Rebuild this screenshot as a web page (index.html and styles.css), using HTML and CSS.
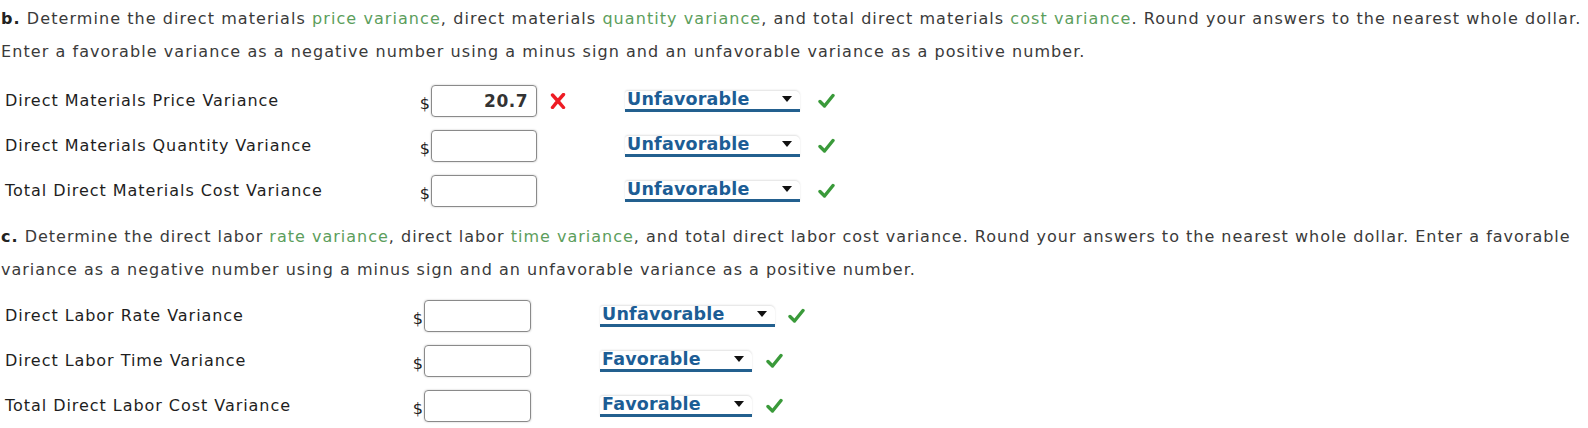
FILE: index.html
```html
<!DOCTYPE html>
<html lang="en">
<head>
<meta charset="utf-8">
<title>Variances</title>
<link rel="stylesheet" href="styles.css">
</head>
<body>
<section class="part part-b">
  <p class="prompt"><b>b.</b> Determine the direct materials <span class="term">price variance</span>, direct materials <span class="term">quantity variance</span>, and total direct materials <span class="term">cost variance</span>. Round your answers to the nearest whole dollar. Enter a favorable variance as a negative number using a minus sign and an unfavorable variance as a positive number.</p>
  <div class="rows">
    <div class="row">
      <span class="label">Direct Materials Price Variance</span>
      <span class="dollar">$</span>
      <span class="input">20.7</span>
      <span class="fb"><svg class="xmark" width="16" height="16" viewBox="0 0 16 16"><path d="M2.5 2 Q8 8 13.5 14.5 M13.5 1.5 Q8 7.5 2.5 14.5" fill="none" stroke="#ee1c24" stroke-width="3.4" stroke-linecap="round"/></svg></span>
      <span class="select w-unfav"><span class="sel-text">Unfavorable</span><svg class="arrow" width="10" height="6" viewBox="0 0 10 6"><path d="M0 0 H10 L5 6 Z" fill="#111"/></svg></span>
      <svg class="check" width="17" height="16" viewBox="0 0 17 16"><path d="M2 8.5 L6.5 13 L15 2.5" fill="none" stroke="#3a9a3a" stroke-width="3.4" stroke-linecap="round" stroke-linejoin="round"/></svg>
    </div>
    <div class="row">
      <span class="label">Direct Materials Quantity Variance</span>
      <span class="dollar">$</span>
      <span class="input"></span>
      <span class="fb"></span>
      <span class="select w-unfav"><span class="sel-text">Unfavorable</span><svg class="arrow" width="10" height="6" viewBox="0 0 10 6"><path d="M0 0 H10 L5 6 Z" fill="#111"/></svg></span>
      <svg class="check" width="17" height="16" viewBox="0 0 17 16"><path d="M2 8.5 L6.5 13 L15 2.5" fill="none" stroke="#3a9a3a" stroke-width="3.4" stroke-linecap="round" stroke-linejoin="round"/></svg>
    </div>
    <div class="row">
      <span class="label">Total Direct Materials Cost Variance</span>
      <span class="dollar">$</span>
      <span class="input"></span>
      <span class="fb"></span>
      <span class="select w-unfav"><span class="sel-text">Unfavorable</span><svg class="arrow" width="10" height="6" viewBox="0 0 10 6"><path d="M0 0 H10 L5 6 Z" fill="#111"/></svg></span>
      <svg class="check" width="17" height="16" viewBox="0 0 17 16"><path d="M2 8.5 L6.5 13 L15 2.5" fill="none" stroke="#3a9a3a" stroke-width="3.4" stroke-linecap="round" stroke-linejoin="round"/></svg>
    </div>
  </div>
</section>
<section class="part part-c">
  <p class="prompt"><b>c.</b> Determine the direct labor <span class="term">rate variance</span>, direct labor <span class="term">time variance</span>, and total direct labor cost variance. Round your answers to the nearest whole dollar. Enter a favorable variance as a negative number using a minus sign and an unfavorable variance as a positive number.</p>
  <div class="rows">
    <div class="row">
      <span class="label">Direct Labor Rate Variance</span>
      <span class="dollar">$</span>
      <span class="input"></span>
      <span class="fb"></span>
      <span class="select w-unfav"><span class="sel-text">Unfavorable</span><svg class="arrow" width="10" height="6" viewBox="0 0 10 6"><path d="M0 0 H10 L5 6 Z" fill="#111"/></svg></span>
      <svg class="check" width="17" height="16" viewBox="0 0 17 16"><path d="M2 8.5 L6.5 13 L15 2.5" fill="none" stroke="#3a9a3a" stroke-width="3.4" stroke-linecap="round" stroke-linejoin="round"/></svg>
    </div>
    <div class="row">
      <span class="label">Direct Labor Time Variance</span>
      <span class="dollar">$</span>
      <span class="input"></span>
      <span class="fb"></span>
      <span class="select w-fav"><span class="sel-text">Favorable</span><svg class="arrow" width="10" height="6" viewBox="0 0 10 6"><path d="M0 0 H10 L5 6 Z" fill="#111"/></svg></span>
      <svg class="check" width="17" height="16" viewBox="0 0 17 16"><path d="M2 8.5 L6.5 13 L15 2.5" fill="none" stroke="#3a9a3a" stroke-width="3.4" stroke-linecap="round" stroke-linejoin="round"/></svg>
    </div>
    <div class="row">
      <span class="label">Total Direct Labor Cost Variance</span>
      <span class="dollar">$</span>
      <span class="input"></span>
      <span class="fb"></span>
      <span class="select w-fav"><span class="sel-text">Favorable</span><svg class="arrow" width="10" height="6" viewBox="0 0 10 6"><path d="M0 0 H10 L5 6 Z" fill="#111"/></svg></span>
      <svg class="check" width="17" height="16" viewBox="0 0 17 16"><path d="M2 8.5 L6.5 13 L15 2.5" fill="none" stroke="#3a9a3a" stroke-width="3.4" stroke-linecap="round" stroke-linejoin="round"/></svg>
    </div>
  </div>
</section>
</body>
</html>
```

FILE: styles.css
```css
html, body {
  margin: 0;
  padding: 0;
  background: #fff;
}
body {
  font-family: "DejaVu Sans", Verdana, sans-serif;
  font-size: 16px;
  color: #333;
  padding-top: 2px;
}
.part {
  padding-left: 1px;
}
.prompt {
  margin: 0;
  line-height: 33px;
  color: #3a3a3a;
  letter-spacing: 1.07px;
}
.part-c .prompt {
  letter-spacing: 1px;
}
.prompt b {
  color: #222;
}
.term {
  color: #5c9e5c;
}
.part-b .prompt {
  margin-bottom: 10px;
}
.part-c {
  margin-top: 7px;
}
.part-c .prompt {
  margin-bottom: 7px;
}
.row {
  display: flex;
  align-items: center;
  height: 45px;
}
.label {
  color: #1e1e1e;
  padding-left: 4px;
  box-sizing: border-box;
  letter-spacing: 0.95px;
}
.part-b .label { width: 414px; }
.part-c .label { width: 407px; }
.dollar {
  width: 16px;
  text-align: right;
  padding-right: 1px;
  box-sizing: border-box;
  color: #222;
  line-height: 16px;
  padding-top: 6px;
}
.input {
  box-sizing: border-box;
  width: 106px;
  height: 32px;
  border: 1px solid #8a8a8a;
  border-radius: 4px;
  box-shadow: 0 0 2px rgba(0,0,0,0.25);
  text-align: right;
  padding-right: 8px;
  font-weight: bold;
  font-size: 17px;
  letter-spacing: 0.5px;
  line-height: 30px;
  color: #333;
}
.part-c .input { width: 107px; }
.fb {
  display: flex;
  align-items: center;
}
.part-b .fb { width: 88px; padding-left: 13px; box-sizing: border-box; }
.part-c .fb { width: 69px; }
.select {
  box-sizing: border-box;
  height: 21px;
  display: flex;
  align-items: flex-end;
  justify-content: space-between;
  background: #fff;
  border-bottom: 3px solid #23608f;
  border-radius: 3px 5px 0 0;
  box-shadow: 0 -1px 2px rgba(0,0,0,0.12);
  padding: 0 8px 0 2px;
  margin-top: 1px;
}
.w-unfav { width: 175px; }
.w-fav { width: 152px; }
.sel-text {
  font-weight: bold;
  font-size: 17.5px;
  letter-spacing: 0.2px;
  color: #1c5d95;
  line-height: 19px;
}
.arrow {
  display: block;
  margin-bottom: 7px;
}
.check {
  display: block;
  margin-left: 18px;
  margin-top: 1px;
}
.part-c .w-unfav + .check { margin-left: 13px; }
.part-c .w-fav + .check { margin-left: 14px; }
```
